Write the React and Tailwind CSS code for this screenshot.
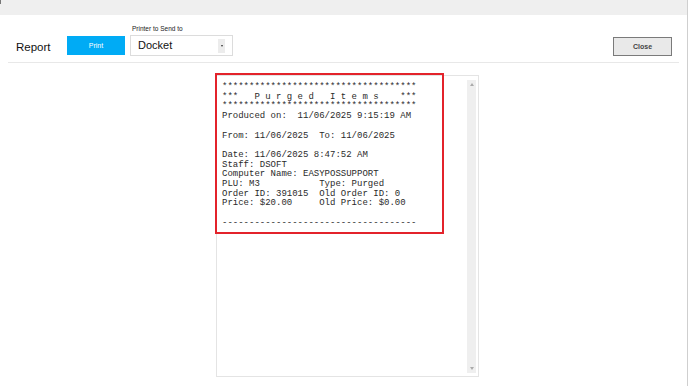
import React from "react";

const reportLines = [
  "************************************",
  "***   P u r g e d   I t e m s    ***",
  "************************************",
  "Produced on:  11/06/2025 9:15:19 AM",
  "",
  "From: 11/06/2025  To: 11/06/2025",
  "",
  "Date: 11/06/2025 8:47:52 AM",
  "Staff: DSOFT",
  "Computer Name: EASYPOSSUPPORT",
  "PLU: M3           Type: Purged",
  "Order ID: 391015  Old Order ID: 0",
  "Price: $20.00     Old Price: $0.00",
  "",
  "------------------------------------",
];

export default function App() {
  return (
    <div className="relative w-[688px] h-[386px] bg-white overflow-hidden border-r border-[#cfcfcf] font-['Liberation_Sans',Arial,sans-serif]">
      <div className="absolute left-0 top-0 w-[1px] h-[4px] bg-[#777]" />

      {/* title strip */}
      <div className="h-[15px] bg-[#efefef]" />

      {/* toolbar */}
      <div className="mx-[8px] h-[48px] border-b border-[#e8e8e8] flex items-start">
        <span className="ml-[8px] mt-[25px] w-[33px] text-[11.5px] leading-[14px] text-[#111] whitespace-nowrap">Report</span>
        <button className="ml-[18px] mt-[21px] w-[58px] h-[19px] bg-[#00abf5] text-white text-[7px] leading-[19px]">
          Print
        </button>
        <div className="ml-[5px] mt-[10px] flex flex-col">
          <span className="pl-[2px] text-[6.5px] leading-[8px] text-[#222]">Printer to Send to</span>
          <div className="mt-[2px] w-[103px] h-[21px] border border-[#dcdcdc] flex items-center">
            <span className="ml-[7px] text-[11px] text-[#111] flex-1">Docket</span>
            <span className="mr-[7px] w-[7px] h-[14px] bg-[#ececec] flex items-center justify-center">
              <span className="w-0 h-0 border-l-[1.5px] border-r-[1.5px] border-t-[2px] border-l-transparent border-r-transparent border-t-[#333]" />
            </span>
          </div>
        </div>
        <div className="flex-1" />
        <button className="mr-[7px] mt-[22px] w-[59px] h-[19px] bg-[#e9e9e9] border border-[#7a7a7a] text-[7px] font-semibold text-[#444] leading-[17px]">
          Close
        </button>
      </div>

      {/* report preview */}
      <div className="relative ml-[216px] mt-[12px] w-[263px] h-[302px] border border-[#e4e4e4] flex">
        <pre className="flex-1 pl-[5px] pt-[7px] font-['Liberation_Mono','Courier_New',monospace] text-[9px] leading-[9.7px] text-[#2a2a2a] whitespace-pre">
          {reportLines.join("\n")}
        </pre>
        <div className="mt-[4px] mb-[3px] mr-[2px] w-[9px] bg-[#efefef] flex flex-col items-center justify-between py-[3px]">
          <span className="w-0 h-0 border-l-[2px] border-r-[2px] border-b-[3px] border-l-transparent border-r-transparent border-b-[#aaa]" />
          <span className="w-0 h-0 border-l-[2px] border-r-[2px] border-t-[3px] border-l-transparent border-r-transparent border-t-[#aaa]" />
        </div>
        <div className="absolute left-[-2px] top-[-3px] w-[229px] h-[161px] border-2 border-[#e3232b]" />
      </div>
    </div>
  );
}
